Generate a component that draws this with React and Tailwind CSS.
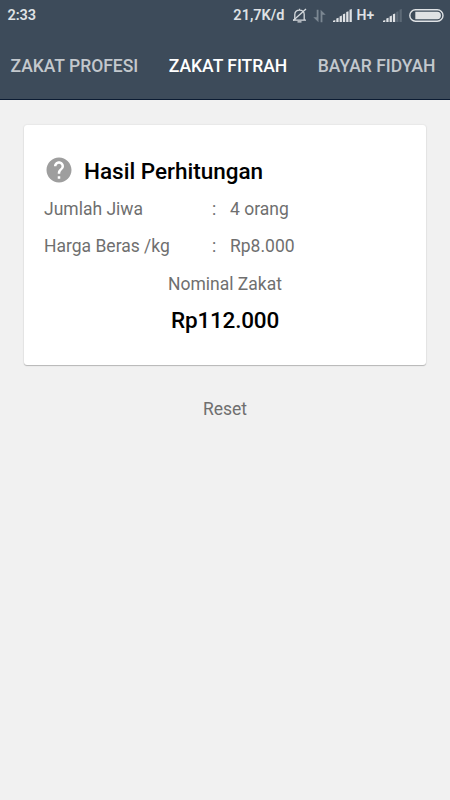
import React from "react";
import { MdHelp } from "react-icons/md";

const TABS = [
  { label: "ZAKAT PROFESI", className: "ml-[10.5px] text-[#c3c8cd]" },
  { label: "ZAKAT FITRAH", className: "ml-[30.5px] text-white" },
  { label: "BAYAR FIDYAH", className: "ml-[30.5px] text-[#c3c8cd]" },
];

const DETAILS = [
  { label: "Jumlah Jiwa", value: "4 orang" },
  { label: "Harga Beras /kg", value: "Rp8.000" },
];

function SignalIcon({ level, className }) {
  return (
    <svg viewBox="0 0 19 13" className={`h-[13px] w-[19px] shrink-0 ${className}`}>
      {[1.2, 3.4, 5.6, 7.8, 10, 12.2].map((h, i) => {
        const x = i * 3.3;
        return (
          <path
            key={h}
            d={`M${x} 13V${13 - h}l2.3-.8V13z`}
            fill={i < level ? "#dfe2e5" : "#5d6a77"}
          />
        );
      })}
    </svg>
  );
}

function MutedBellIcon() {
  return (
    <svg
      viewBox="0 0 15 15"
      className="ml-[7px] h-[15px] w-[15px] shrink-0"
      fill="none"
      stroke="#d5d9dd"
      strokeWidth="1.3"
    >
      <path d="M1 12.1h13M2.8 12V6.5C2.8 3.8 4.8 2.2 7.5 2.2s4.7 1.6 4.7 4.3V12M5.5 13.8h4M7.5 2.2V.8" />
      <path d="M1.2 12.5L14 1" />
    </svg>
  );
}

function DataArrowsIcon() {
  return (
    <svg viewBox="0 0 13 14" className="ml-[6px] h-[14px] w-[13px] shrink-0" fill="#7b8792">
      <path d="M3.7.8h1.8v12.4L.3 8.3h3.4zM7.6 13.2V.8l5.1 4.9H9.4v7.5z" />
    </svg>
  );
}

function BatteryIcon() {
  return (
    <svg viewBox="0 0 35 13" className="ml-[7px] h-[13px] w-[35px] shrink-0">
      <rect x="0.8" y="0.8" width="33.2" height="11.4" rx="5.7" fill="none" stroke="#dfe2e5" strokeWidth="1.4" />
      <path d="M6.3 2.8H28.2a3.7 3.7 0 0 1 0 7.4H6.3z" fill="#dfe2e5" />
    </svg>
  );
}

function StatusBar() {
  return (
    <div className="flex h-[31px] items-center text-[14.5px] font-semibold text-[#dfe2e5]">
      <span className="ml-[7.5px] tracking-[-0.1px]">2:33</span>
      <div className="ml-auto mr-[6.5px] flex items-center whitespace-nowrap">
        <span>21,7K/d</span>
        <MutedBellIcon />
        <DataArrowsIcon />
        <SignalIcon level={6} className="ml-[7px]" />
        <span className="ml-[5px] w-[18px] text-[14px]">H+</span>
        <SignalIcon level={4} className="ml-[8px]" />
        <BatteryIcon />
      </div>
    </div>
  );
}

export default function App() {
  return (
    <div className="h-[800px] w-[450px] overflow-hidden bg-[#f1f1f1] font-['Roboto',sans-serif]">
      <header className="h-[100px] border-b border-[#0b1b32] bg-[#3d4b5a]">
        <StatusBar />
        <nav className="flex h-[70px] items-center text-[17.5px] font-medium whitespace-nowrap">
          {TABS.map((tab) => (
            <button key={tab.label} type="button" className={tab.className}>
              {tab.label}
            </button>
          ))}
        </nav>
      </header>

      <main className="px-6 pt-[25px] text-[17.5px] text-[#6f6f6f]">
        <section className="h-[240px] rounded-[3px] bg-white px-5 pt-[27px] shadow-[0_1px_1px_rgba(0,0,0,0.22),0_0_2px_rgba(0,0,0,0.12)]">
          <div className="flex h-[38px] items-center">
            <MdHelp className="mb-[2px] h-[30px] w-[30px] text-[#9e9e9e]" />
            <h1 className="mt-[2px] ml-[10px] text-[22.5px] font-medium text-black">Hasil Perhitungan</h1>
          </div>

          {DETAILS.map(({ label, value }) => (
            <div key={label} className="flex h-[37.5px] items-center">
              <span className="w-[168px]">{label}</span>
              <span className="w-[18px]">:</span>
              <span>{value}</span>
            </div>
          ))}

          <div className="flex h-[37.5px] items-center justify-center">Nominal Zakat</div>
          <div className="flex h-[37.5px] items-center justify-center text-[22.5px] font-medium tracking-[-0.2px] text-black">
            Rp112.000
          </div>
        </section>

        <button type="button" className="mx-auto mt-[31px] block leading-[26px]">
          Reset
        </button>
      </main>
    </div>
  );
}
